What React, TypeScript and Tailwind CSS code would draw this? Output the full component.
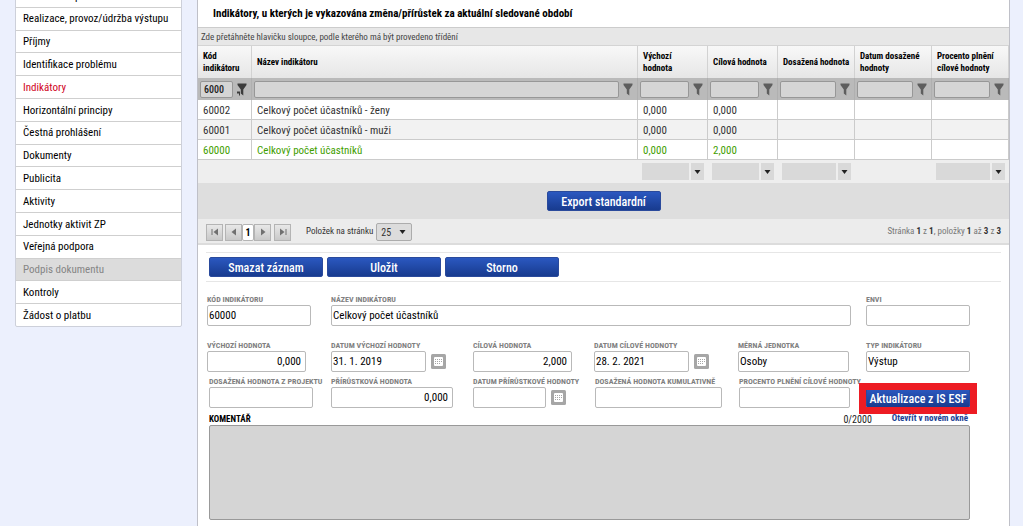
import React, { useState } from "react";

type Column = {
  id: string;
  label: React.ReactNode;
  title: string;
  width: string;
  aggregate: boolean;
};

type IndicatorRow = {
  code: string;
  name: string;
  start: string;
  target: string;
};

const menuItems = [
  "Umístění dopadu",
  "Realizace, provoz/údržba výstupu",
  "Příjmy",
  "Identifikace problému",
  "Indikátory",
  "Horizontální principy",
  "Čestná prohlášení",
  "Dokumenty",
  "Publicita",
  "Aktivity",
  "Jednotky aktivit ZP",
  "Veřejná podpora",
  "Podpis dokumentu",
  "Kontroly",
  "Žádost o platbu",
];

const columns: Column[] = [
  { id: "code", title: "Kód indikátoru", label: "Kód indikátoru", width: "w-[54px]", aggregate: false },
  { id: "name", title: "Název indikátoru", label: "Název indikátoru", width: "", aggregate: false },
  { id: "start", title: "Výchozí hodnota", label: <>Výchozí<br />hodnota</>, width: "w-[70px]", aggregate: true },
  { id: "target", title: "Cílová hodnota", label: "Cílová hodnota", width: "w-[70px]", aggregate: true },
  { id: "reached", title: "Dosažená hodnota", label: "Dosažená hodnota", width: "w-[77px]", aggregate: true },
  { id: "date", title: "Datum dosažené hodnoty", label: "Datum dosažené hodnoty", width: "w-[77px]", aggregate: false },
  { id: "percent", title: "Procento plnění cílové hodnoty", label: "Procento plnění cílové hodnoty", width: "w-[77px]", aggregate: true },
];

const rows: IndicatorRow[] = [
  { code: "60002", name: "Celkový počet účastníků - ženy", start: "0,000", target: "0,000" },
  { code: "60001", name: "Celkový počet účastníků - muži", start: "0,000", target: "0,000" },
  { code: "60000", name: "Celkový počet účastníků", start: "0,000", target: "2,000" },
];

/* ---------- ICONS ---------- */
const FunnelIcon = ({ active }: { active?: boolean }) => (
  <svg width="10" height="13" viewBox="0 0 10 13" fill={active ? "#3c3c3c" : "#5e5e5e"} aria-hidden="true">
    <path d="M0.5 0.5H9.5V2L6.3 6.5V12.5L3.8 10.5V6.5L0.5 2Z" />
    {active && <path d="M0 8.5H3V12.5H2V10.5H0Z" />}
  </svg>
);

const CalendarIcon = () => (
  <svg width="15" height="15" viewBox="0 0 15 15" aria-hidden="true">
    <rect width="15" height="15" rx="1.5" fill="#a6a6a6" />
    <rect x="3" y="3" width="9" height="9" rx="1" fill="#fff" />
    <path d="M4 5h1v1H4zM6 5h1v1H6zM8 5h1v1H8zM10 5h1v1h-1zM4 7h1v1H4zM6 7h1v1H6zM8 7h1v1H8zM10 7h1v1h-1zM4 9h1v1H4zM6 9h1v1H6zM8 9h1v1H8z" fill="#a6a6a6" />
  </svg>
);

const CaretIcon = () => (
  <svg width="7" height="4" viewBox="0 0 7 4" fill="#222" aria-hidden="true">
    <path d="M0.5 0H6.5L3.5 4Z" />
  </svg>
);

const pagerPaths = {
  first: { bar: "M2 2V8", arrow: "M8 1.5V8.5L3.5 5Z" },
  prev: { bar: "", arrow: "M7 1.5V8.5L2.5 5Z" },
  next: { bar: "", arrow: "M3 1.5V8.5L7.5 5Z" },
  last: { bar: "M8 2V8", arrow: "M2 1.5V8.5L6.5 5Z" },
};

const PagerButton = ({ kind, label }: { kind: keyof typeof pagerPaths; label: string }) => (
  <button
    type="button"
    aria-label={label}
    className="flex h-[17px] w-[17px] shrink-0 items-center justify-center border border-[#b4b4b4] bg-linear-to-b from-[#e8e8e8] to-[#c9c9c9]"
  >
    <svg width="10" height="10" viewBox="0 0 10 10" fill="#707070" aria-hidden="true">
      <path d={pagerPaths[kind].arrow} />
      <path d={pagerPaths[kind].bar} stroke="#707070" />
    </svg>
  </button>
);

/* ---------- CONTROLS ---------- */
const BlueButton = ({ children, className = "w-[114px]" }: { children: React.ReactNode; className?: string }) => (
  <button
    type="button"
    className={`h-5 shrink-0 rounded-xs border border-[#2a4a9c] bg-linear-to-b from-[#2b58c0] to-[#183b8f] pt-px text-center text-[12px] leading-4 font-medium whitespace-nowrap text-white ${className}`}
  >
    {children}
  </button>
);

type FieldProps = {
  id: string;
  label: string;
  value?: string;
  width: string;
  className?: string;
  right?: boolean;
  calendar?: boolean;
};

const Field = ({ id, label, value = "", width, className = "", right, calendar }: FieldProps) => (
  <div className={`min-w-0 ${className}`}>
    <label htmlFor={id} className="block h-[11px] text-[8px] leading-3 font-bold whitespace-nowrap text-[#808080] uppercase">
      {label}
    </label>
    <div className="flex items-center gap-[5px]">
      <input
        id={id}
        defaultValue={value}
        className={`h-[21px] min-w-0 rounded-xs border border-[#b9b9b9] bg-white text-[11px] text-black ${width} ${right ? "pr-1 text-right" : "pl-px"}`}
      />
      {calendar && (
        <button type="button" aria-label={`Vybrat: ${label}`} className="shrink-0">
          <CalendarIcon />
        </button>
      )}
    </div>
  </div>
);

/* ---------- LEFT MENU ---------- */
const SideMenu = () => (
  <nav className="w-[167px] shrink-0">
    <ul className="-mt-4 flex h-[343px] flex-col rounded-xs border border-[#cdd0da] bg-white text-[11px]">
      {menuItems.map((item) => (
        <li key={item} className="flex min-h-0 flex-1 border-b border-[#cfcfcf] last:border-b-0">
          <a
            href="#"
            className={`flex w-full items-center pt-[2px] pl-[7px] whitespace-nowrap ${
              item === "Indikátory"
                ? "text-[#d0021b]"
                : item === "Podpis dokumentu"
                  ? "bg-[#dcdcdc] text-[#858585]"
                  : "text-black"
            }`}
          >
            {item}
          </a>
        </li>
      ))}
    </ul>
  </nav>
);

/* ---------- INDICATOR TABLE ---------- */
const IndicatorTable = () => (
  <table className="w-full table-fixed border-separate border-spacing-0 text-left">
    <thead>
      <tr className="h-8 bg-linear-to-b from-[#f8f8f8] to-[#e6e6e6] text-[9px] leading-3 text-black">
        {columns.map((col) => (
          <th key={col.id} scope="col" className={`border-r border-[#d2d2d2] py-0 pr-0 pl-[5px] font-bold ${col.width}`}>
            {col.label}
          </th>
        ))}
      </tr>
      <tr className="h-[22px] bg-[#bababa]">
        {columns.map((col) => (
          <td key={col.id} className="border-r border-[#b0b0b0] p-0">
            <div className="flex items-center gap-1 pr-1 pl-[2px]">
              <input
                aria-label={`Filtr: ${col.title}`}
                defaultValue={col.id === "code" ? "6000" : ""}
                className="h-[17px] min-w-0 flex-1 rounded-xs border border-[#979797] bg-[#d5d5d5] pl-[3px] text-[10px] font-medium text-[#222]"
              />
              <button type="button" aria-label={`Filtrovat: ${col.title}`} className="shrink-0">
                <FunnelIcon active={col.id === "code"} />
              </button>
            </div>
          </td>
        ))}
      </tr>
    </thead>
    <tbody>
      {rows.map((row) => (
        <tr
          key={row.code}
          className={`h-5 text-[11px] leading-4 ${
            row.code === "60000" ? "bg-white text-[#3f9e00]" : "bg-white text-[#333] even:bg-[#f2f2f2]"
          }`}
        >
          {[row.code, row.name, row.start, row.target, "", "", ""].map((cell, i) => (
            <td key={i} className="border-r border-b border-[#cbcbcb] pt-[2px] pr-0 pb-0 pl-[5px] whitespace-nowrap">
              {cell}
            </td>
          ))}
        </tr>
      ))}
    </tbody>
    <tfoot>
      <tr className="h-[23px] bg-[#eee]">
        {columns.map((col) => (
          <td key={col.id} className="p-0">
            {col.aggregate && (
              <div className="flex gap-[2px] pr-1 pl-1">
                <input aria-label={`Souhrn: ${col.title}`} className="h-[17px] min-w-0 flex-1 bg-[#d9d9d9]" />
                <button
                  type="button"
                  aria-label={`Zvolit souhrn: ${col.title}`}
                  className="flex h-[17px] w-[13px] shrink-0 items-center justify-center bg-[#d9d9d9]"
                >
                  <CaretIcon />
                </button>
              </div>
            )}
          </td>
        ))}
      </tr>
    </tfoot>
  </table>
);

const Pager = () => (
  <div className="flex h-[26px] items-center border-b-2 border-[#dcdcdc] bg-[#ececec] px-2 pt-[2px] text-[9px] text-[#333]">
    <PagerButton kind="first" label="První stránka" />
    <div className="ml-[2px] flex items-center">
      <PagerButton kind="prev" label="Předchozí stránka" />
      <button type="button" className="h-[17px] w-3 rounded-xs border border-[#b4b4b4] bg-white text-[10px] leading-4 font-bold text-black">
        1
      </button>
      <PagerButton kind="next" label="Další stránka" />
    </div>
    <div className="ml-[3px]">
      <PagerButton kind="last" label="Poslední stránka" />
    </div>
    <label htmlFor="page-size" className="ml-[15px] whitespace-nowrap">
      Položek na stránku
    </label>
    <div className="relative ml-[3px]">
      <select
        id="page-size"
        defaultValue="25"
        className="block h-[18px] w-9 appearance-none rounded-xs border border-[#acacac] bg-[#dcdcdc] pl-1 text-[10px]"
      >
        <option>25</option>
        <option>50</option>
      </select>
      <span className="pointer-events-none absolute top-[7px] right-[6px]">
        <CaretIcon />
      </span>
    </div>
    <p className="ml-auto whitespace-nowrap text-[#777]">
      Stránka <b className="text-[#333]">1</b> z <b className="text-[#333]">1</b>, položky{" "}
      <b className="text-[#333]">1</b> až <b className="text-[#333]">3</b> z <b className="text-[#333]">3</b>
    </p>
  </div>
);

/* ---------- DETAIL FORM ---------- */
const gridCols = "grid grid-cols-[124fr_142fr_121fr_144fr_128fr_104fr]";

const DetailForm = () => {
  const [comment, setComment] = useState("");

  return (
    <form className="pt-[7px]">
      <div className="mx-2 flex gap-1 border-y border-[#e6e6e6] py-1 pl-[3px]">
        <BlueButton>Smazat záznam</BlueButton>
        <BlueButton>Uložit</BlueButton>
        <BlueButton>Storno</BlueButton>
      </div>

      <div className="pt-3 pr-[39px] pl-[9px]">
        <div className={gridCols}>
          <Field id="kod" label="Kód indikátoru" value="60000" width="w-[104px]" />
          <Field id="nazev" label="Název indikátoru" value="Celkový počet účastníků" width="w-full" className="col-span-4 pr-[15px]" />
          <Field id="envi" label="ENVI" width="w-full" />
        </div>

        <div className={`mt-[14px] ${gridCols}`}>
          <Field id="vychozi" label="Výchozí hodnota" value="0,000" width="w-[99px]" right />
          <Field id="datum-vychozi" label="Datum výchozí hodnoty" value="31. 1. 2019" width="w-[95px]" calendar />
          <Field id="cilova" label="Cílová hodnota" value="2,000" width="w-[99px]" right />
          <Field id="datum-cilove" label="Datum cílové hodnoty" value="28. 2. 2021" width="w-[95px]" calendar />
          <Field id="jednotka" label="Měrná jednotka" value="Osoby" width="w-[111px]" />
          <Field id="typ" label="Typ indikátoru" value="Výstup" width="w-full" />
        </div>

        <div className={`mt-1 ${gridCols}`}>
          <Field id="dosazena" label="Dosažená hodnota z projektu" width="w-[104px]" className="pl-[2px]" />
          <Field id="prirustkova" label="Přírůstková hodnota" value="0,000" width="w-[122px]" right />
          <Field id="datum-prir" label="Datum přírůstkové hodnoty" width="w-[73px]" calendar />
          <Field id="kumulativne" label="Dosažená hodnota kumulativně" width="w-[127px]" className="pl-px" />
          <Field id="procento" label="Procento plnění cílové hodnoty" width="w-[111px]" className="pl-px" />
          <div className="relative min-w-0 self-end">
            <BlueButton className="block w-full">Aktualizace z IS ESF</BlueButton>
            <span className="pointer-events-none absolute -inset-x-[7px] -top-[5px] -bottom-[6px] border-[7px] border-[#ed1c24]" />
          </div>
        </div>

        <div className="mt-[5px] flex h-3 items-center pl-[2px] text-[9px] font-bold">
          <label htmlFor="komentar" className="pt-px text-black uppercase">
            Komentář
          </label>
          <span className="ml-auto text-[10px] font-normal text-[#222]">{comment.length}/2000</span>
          <a href="#" className="mr-[2px] ml-5 text-[9px] text-[#1b3f94]">
            Otevřít v novém okně
          </a>
        </div>
        <div className="pl-[2px]">
          <textarea
            id="komentar"
            value={comment}
            maxLength={2000}
            onChange={(e) => setComment(e.target.value)}
            className="block h-[95px] w-full resize-none rounded-xs border border-[#999] bg-[#d5d5d5] p-1 text-[11px]"
          />
        </div>
      </div>
    </form>
  );
};

const App: React.FC = () => (
  <div className="flex min-h-screen gap-[15px] overflow-hidden bg-[#ecf0fd] pr-[13px] pl-[15px] font-['Roboto_Condensed','Liberation_Sans_Narrow',Roboto,sans-serif]">
    <SideMenu />
    <main className="min-w-0 flex-1 border-x border-[#bfc0c8] bg-white">
      <h1 className="flex h-7 items-center border-b border-[#ccc] pt-[2px] pl-[15px] text-[11px] font-bold text-black">
        Indikátory, u kterých je vykazována změna/přírůstek za aktuální sledované období
      </h1>
      <p className="flex h-[18px] items-center border-b border-[#d4d4d4] bg-[#e7e7e7] pt-[2px] pl-[3px] text-[9px] text-[#444]">
        Zde přetáhněte hlavičku sloupce, podle kterého má být provedeno třídění
      </p>
      <IndicatorTable />
      <div className="flex h-9 items-center justify-center bg-[#dedede]">
        <BlueButton>Export standardní</BlueButton>
      </div>
      <Pager />
      <DetailForm />
    </main>
  </div>
);

export default App;
